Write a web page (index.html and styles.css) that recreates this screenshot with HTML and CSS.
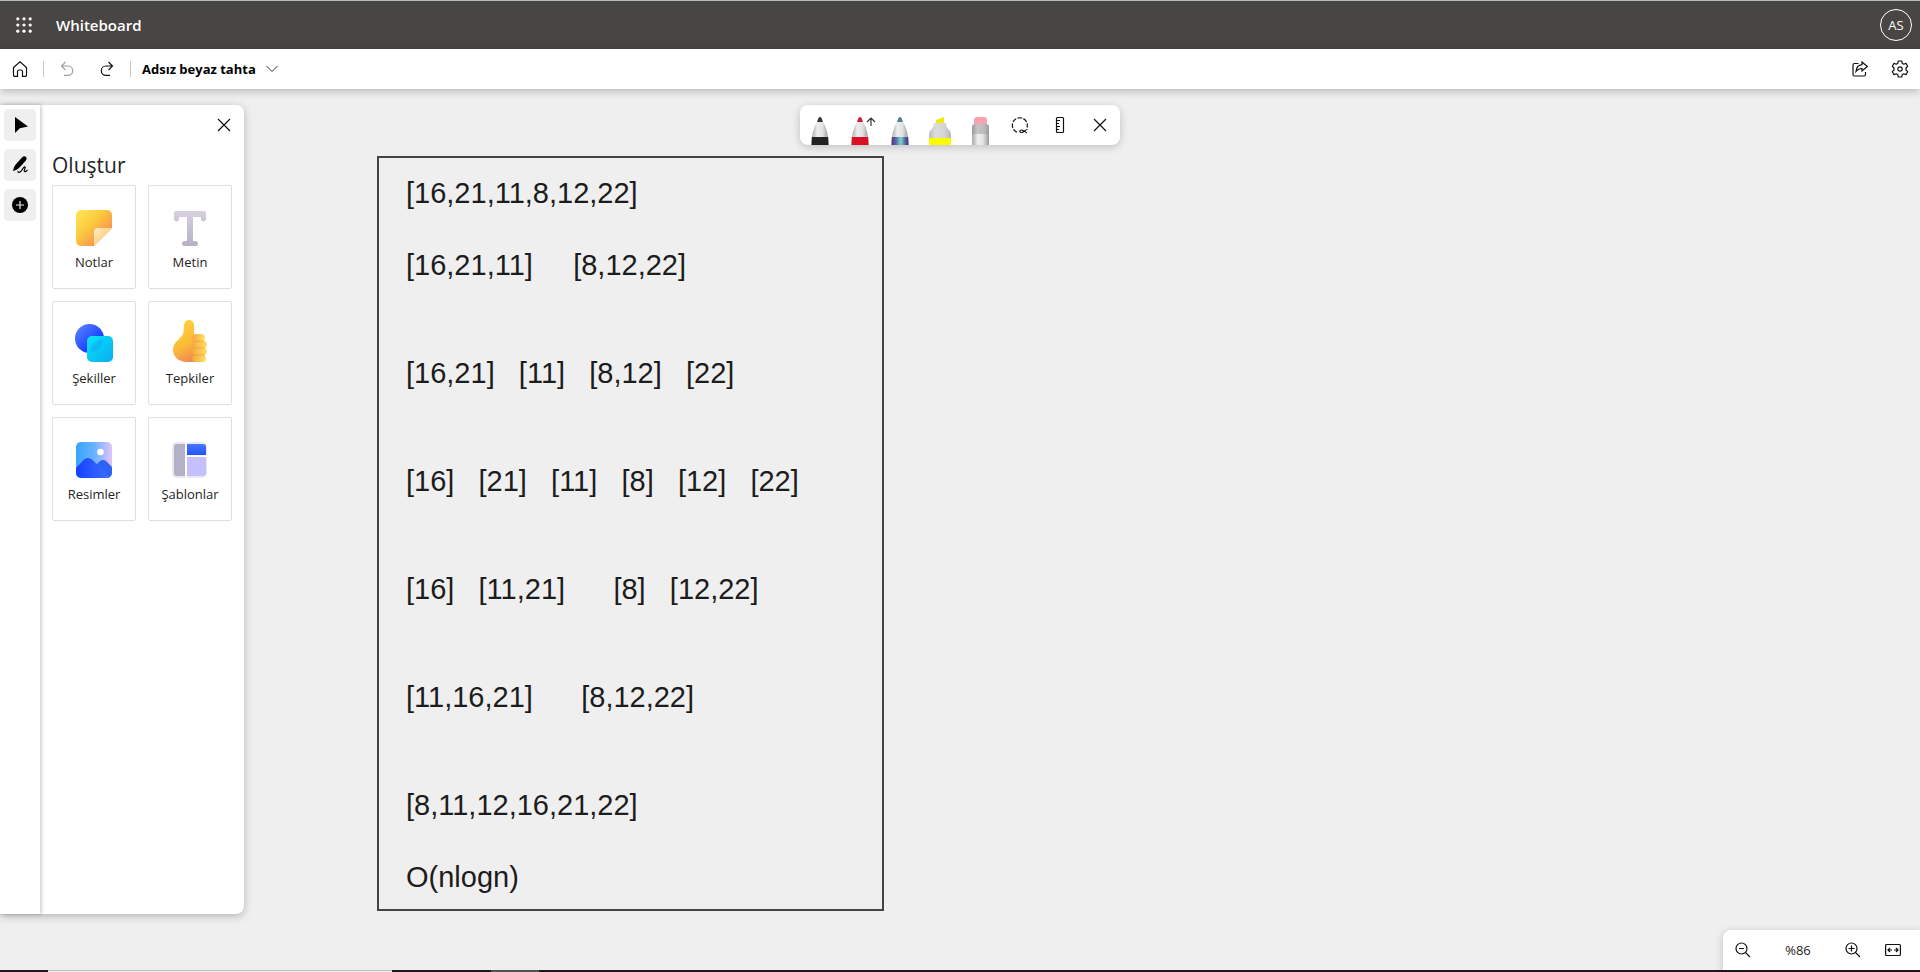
FILE: index.html
```html
<!DOCTYPE html>
<html lang="tr">
<head>
<meta charset="utf-8">
<title>Whiteboard</title>
<link rel="stylesheet" href="styles.css">
</head>
<body>
<header class="suite">
  <button class="icon-btn waffle" aria-label="Uygulama başlatıcısı"><svg width="16" height="16" viewBox="0 0 16 16" fill="#fff"><circle cx="1.8" cy="1.8" r="1.6"/><circle cx="8" cy="1.8" r="1.6"/><circle cx="14.2" cy="1.8" r="1.6"/><circle cx="1.8" cy="8" r="1.6"/><circle cx="8" cy="8" r="1.6"/><circle cx="14.2" cy="8" r="1.6"/><circle cx="1.8" cy="14.2" r="1.6"/><circle cx="8" cy="14.2" r="1.6"/><circle cx="14.2" cy="14.2" r="1.6"/></svg></button>
  <span class="brand">Whiteboard</span>
  <button class="avatar">AS</button>
</header>
<nav class="bar">
  <button class="icon-btn" aria-label="Giriş"><svg class="line" width="16" height="16" viewBox="0 0 16 16"><path d="M1.500 6.500 8 .8l6.500 5.700v8a.8.8 0 0 1-.8.800H10.500V10.500a1.500 1.500 0 0 0-1.500-1.500H7a1.500 1.500 0 0 0-1.500 1.500v4.800H2.300a.8.8 0 0 1-.8-.8z"/></svg></button>
  <span class="rule"></span>
  <button class="icon-btn" aria-label="Geri al" disabled><svg class="line" width="16" height="16" viewBox="0 0 16 16"><path d="M6.500 1 2.500 5l4 4M2.500 5H9a4.700 4.700 0 0 1 0 9.400H5"/></svg></button>
  <button class="icon-btn" aria-label="Yinele"><svg class="line" width="16" height="16" viewBox="0 0 16 16"><path d="m9.500 1 4 4-4 4M13.500 5H7a4.700 4.700 0 0 0 0 9.400h4"/></svg></button>
  <span class="rule"></span>
  <button class="title-btn">Adsız beyaz tahta<svg width="12" height="12" viewBox="0 0 12 12" fill="none" stroke="#333"><path d="m.5 3 5.500 5.500L11.500 3"/></svg></button>
  <span class="spacer"></span>
  <button class="icon-btn" aria-label="Paylaş"><svg class="line" width="16" height="16" viewBox="0 0 16 16"><path d="M6.500 2.500h-4A1.500 1.500 0 0 0 1 4v9.500A1.500 1.500 0 0 0 2.500 15H12a1.500 1.500 0 0 0 1.500-1.500V11M10 1l5.300 4.500L10 10V7.500c-3 0-4.500 1-6 3C4.300 6.500 6.500 4 10 3.700z"/></svg></button>
  <button class="icon-btn" aria-label="Ayarlar"><svg class="line" width="18" height="18" viewBox="0 0 18 18" stroke-linejoin="round"><path d="M7.300 1h3.400l.5 2.300 1.500.9 2.300-.8 1.700 2.900L15 8v2l1.700 1.700-1.700 2.900-2.300-.8-1.500.9-.5 2.300H7.300l-.5-2.300-1.500-.9-2.300.8-1.700-2.900L3 10V8L1.300 6.300 3 3.400l2.300.8 1.500-.9z"/><circle cx="9" cy="9" r="2.200"/></svg></button>
</nav>
<main class="board">
  <section class="frame"><pre class="note">[16,21,11,8,12,22]

[16,21,11]     [8,12,22]


[16,21]   [11]   [8,12]   [22]


[16]   [21]   [11]   [8]   [12]   [22]


[16]   [11,21]      [8]   [12,22]


[11,16,21]      [8,12,22]


[8,11,12,16,21,22]

O(nlogn)</pre></section>

  <aside class="dock">
    <div class="rail">
      <button class="tool" aria-label="Seç"><svg width="16" height="18" viewBox="0 0 16 18"><path d="M3 1v16l4.800-4.800L16 10.500z"/></svg></button>
      <button class="tool" aria-label="Mürekkep"><svg width="16" height="18" viewBox="0 0 16 18"><path d="M10 1.500c1.500-1.400 3-1.600 4-.6s.8 2.500-.5 4L7.500 11.500c-1.500 1.600-3 2.500-6.500 3.500.6-3 1.300-5 2.700-6.500z"/><path d="M5.500 15.500c1.500 1.500 3.200.8 4.500-1.500s3-4 3.200-2.600-1.700 3-.8 4 1.800-.6 3.300-1.400" fill="none" stroke="#000" stroke-width="1.200"/></svg></button>
      <button class="tool" aria-label="Oluştur"><svg width="16" height="16" viewBox="0 0 16 16"><circle cx="8" cy="8" r="8"/><path d="M8 4v8M4 8h8" stroke="#eee" stroke-width="1.200"/></svg></button>
    </div>
    <div class="create">
      <button class="icon-btn close" aria-label="Kapat"><svg class="line" width="14" height="14" viewBox="0 0 14 14"><path d="m1 1 12 12M13 1 1 13"/></svg></button>
      <h2>Oluştur</h2>
      <div class="cards">
        <button class="card"><svg width="36" height="36" viewBox="0 0 36 36"><defs><linearGradient id="n" x1="0" y1="0" x2="1" y2="1"><stop offset="0" stop-color="#ffe75c"/><stop offset=".4" stop-color="#fcca3c"/><stop offset=".8" stop-color="#f78c55"/></linearGradient><linearGradient id="n2" x1="0" y1="0" x2=".6" y2=".6"><stop offset="0" stop-color="#fff0cb"/><stop offset="1" stop-color="#fbcf80"/></linearGradient></defs><path d="M5 0h26a5 5 0 0 1 5 5v13L18 36H5a5 5 0 0 1-5-5V5a5 5 0 0 1 5-5" fill="url(#n)"/><path d="M18 36V22a4 4 0 0 1 4-4h14z" fill="url(#n2)"/></svg>Notlar</button>
        <button class="card"><svg width="36" height="36" viewBox="0 0 36 36"><defs><linearGradient id="t" x1="0" y1="0" x2="0" y2="1"><stop offset="0" stop-color="#d6d0de"/><stop offset="1" stop-color="#b8b0c5"/></linearGradient></defs><path d="M4 1h28a2 2 0 0 1 2 2v6.500a2.600 2.600 0 0 1-5 0V7h-8v24h2.500a2.500 2.500 0 0 1 0 5h-11a2.500 2.500 0 0 1 0-5H15V7H7v2.500a2.600 2.600 0 0 1-5 0V3a2 2 0 0 1 2-2" fill="url(#t)"/></svg>Metin</button>
        <button class="card"><svg width="38" height="38" viewBox="0 0 38 38"><defs><linearGradient id="s" x1="0" y1="0" x2="1" y2="1"><stop offset="0" stop-color="#5d8bff"/><stop offset=".7" stop-color="#173dff"/></linearGradient><linearGradient id="s2" x1="0" y1="0" x2="1" y2="1"><stop offset="0" stop-color="#0be4fa"/><stop offset="1" stop-color="#07adf0"/></linearGradient></defs><circle cx="14.500" cy="14.500" r="14.500" fill="url(#s)"/><rect x="12" y="12" width="26" height="26" rx="5" fill="url(#s2)"/><path d="M28 15C28 22 23 28 15 28 16 21 21 16 28 15" fill="#11a4f3" opacity=".5"/></svg>Şekiller</button>
        <button class="card"><svg width="36" height="42" viewBox="0 -4 36 42"><defs><linearGradient id="u" x1=".3" y1="0" x2=".6" y2="1"><stop offset="0" stop-color="#ffd13d"/><stop offset=".6" stop-color="#fdba36"/><stop offset="1" stop-color="#ee8b54"/></linearGradient><linearGradient id="u2" x1="0" y1="0" x2="1" y2="0"><stop offset="0" stop-color="#f6a63b"/><stop offset="1" stop-color="#ffe163"/></linearGradient></defs><path d="M12 1a5 5 0 0 1 10 0v13h4v24H15C7 38 1 33 1 26c0-6 4-9 8-13 2-2 3-5 3-12" fill="url(#u)"/><g fill="url(#u2)"><rect x="20" y="10" width="13" height="7.500" rx="3.700"/><rect x="20" y="17" width="15" height="7" rx="3.500"/><rect x="20" y="24" width="15" height="7" rx="3.500"/><rect x="20" y="31" width="14" height="7" rx="3.500"/></g><path d="M21 17.300h11M21 24h12M21 31h12" stroke="#e8a23c" stroke-width=".8"/></svg>Tepkiler</button>
        <button class="card"><svg width="36" height="36" viewBox="0 0 36 36"><defs><linearGradient id="r" x1="0" y1="0" x2="1" y2="0"><stop offset="0" stop-color="#38a5ff"/><stop offset=".5" stop-color="#66b2ff"/><stop offset="1" stop-color="#e2c2fb"/></linearGradient><linearGradient id="r2" x1="0" y1="0" x2="1" y2="0"><stop offset="0" stop-color="#1641ff"/><stop offset="1" stop-color="#3f73ff"/></linearGradient><clipPath id="rc"><rect width="36" height="36" rx="5"/></clipPath></defs><g clip-path="url(#rc)"><path d="M0 0h36v36H0z" fill="url(#r)"/><path d="m16 27 8-8q3-2 6 0l6 6v11H16z" fill="#2e62f4"/><path d="m0 26 8-8.500q4-3 8 0L35 36H0z" fill="url(#r2)"/></g><circle cx="24.500" cy="10" r="3.300" fill="#fff"/></svg>Resimler</button>
        <button class="card"><svg width="36" height="36" viewBox="0 0 36 36"><defs><linearGradient id="b" x1="0" y1="0" x2="0" y2="1"><stop offset="0" stop-color="#4478ff"/><stop offset="1" stop-color="#2453f5"/></linearGradient></defs><rect width="35" height="36" rx="5" fill="#eae8ed"/><path d="M5 2h8v32H5a3 3 0 0 1-3-3V5a3 3 0 0 1 3-3" fill="#b3b1c8"/><path d="M15 2h16a3 3 0 0 1 3 3v8H15z" fill="url(#b)"/><path d="M15 15h19v16a3 3 0 0 1-3 3H15z" fill="#c3c0fd"/><path d="M13 0h2v36h-2zM15 13h20v2H15z" fill="#fff"/></svg>Şablonlar</button>
      </div>
    </div>
  </aside>

  <div class="pens">
    <button class="pen" aria-label="Siyah kalem"><svg width="40" height="40" viewBox="0 0 40 40"><defs><linearGradient id="p"><stop offset="0" stop-color="#aaa"/><stop offset=".35" stop-color="#eee"/><stop offset=".65" stop-color="#e2e2e2"/><stop offset="1" stop-color="#999"/></linearGradient></defs><path d="M17 17C13 24 12 28 11.500 40h17C28 28 27 24 23 17z" fill="url(#p)"/><path d="m17 17 1.500-4q1.500-2 3 0l1.500 4z" fill="#333"/><path d="M11.800 32h16.400l.3 8h-17z" fill="#222"/></svg></button>
    <button class="pen" aria-label="Kırmızı kalem"><svg width="40" height="40" viewBox="0 0 40 40"><path d="M17 17C13 24 12 28 11.500 40h17C28 28 27 24 23 17z" fill="url(#p)"/><path d="m17 17 1.500-4q1.500-2 3 0l1.500 4z" fill="#d9142d"/><path d="M11.800 32h16.400l.3 8h-17z" fill="#dc1025"/><path d="M31 21v-8m-4 4 4-4 4 4" fill="none" stroke="#333" stroke-width="1.200"/></svg></button>
    <button class="pen" aria-label="Galaksi kalem"><svg width="40" height="40" viewBox="0 0 40 40"><defs><linearGradient id="g"><stop offset="0" stop-color="#5b2c74"/><stop offset=".3" stop-color="#5378ae"/><stop offset=".55" stop-color="#86d1c5"/><stop offset=".8" stop-color="#476da5"/><stop offset="1" stop-color="#57256b"/></linearGradient></defs><path d="M17 17C13 24 12 28 11.500 40h17C28 28 27 24 23 17z" fill="url(#p)"/><path d="m17 17 1.500-4q1.500-2 3 0l1.500 4z" fill="#4b8588"/><path d="M11.800 32h16.400l.3 8h-17z" fill="url(#g)"/></svg></button>
    <button class="pen" aria-label="Vurgulayıcı"><svg width="40" height="40" viewBox="0 0 40 40"><defs><linearGradient id="h"><stop offset="0" stop-color="#bbb"/><stop offset=".3" stop-color="#dcdcdc"/><stop offset=".7" stop-color="#d4d4d4"/><stop offset="1" stop-color="#b5b5b5"/></linearGradient></defs><path d="M14 18h12c0 7 5 6 5 12v10H9V30c0-6 5-5 5-12" fill="url(#h)"/><path d="M16 18v-3l8-3v6z" fill="#f2ed00"/><path d="M9 33h22v7H9z" fill="#fbfb00"/></svg></button>
    <button class="pen" aria-label="Silgi"><svg width="40" height="40" viewBox="0 0 40 40"><defs><linearGradient id="e"><stop offset="0" stop-color="#9a9a9a"/><stop offset=".3" stop-color="#c4c4c4"/><stop offset=".7" stop-color="#bdbdbd"/><stop offset="1" stop-color="#999"/></linearGradient></defs><path d="M14 19v-4q0-3 3-3h7q3 0 3 3v4z" fill="#f8a2ad"/><path d="M12 40V22q0-3 3-3h11q3 0 3 3v18z" fill="url(#e)"/><path d="M12 29h17v11H12z" fill="url(#p)"/></svg></button>
    <button class="pen" aria-label="Kement"><svg class="line" width="40" height="40" viewBox="0 0 40 40"><path d="M17 27.200A7.500 7.500 0 1 1 27 22.500" stroke-dasharray="4.500 1.500"/><path d="M27 28c-2-1-3.500-3-5.500-3s-2.500 2.500 0 2.500S25 24.500 27.500 24.500"/></svg></button>
    <button class="pen" aria-label="Cetvel"><svg class="line" width="40" height="40" viewBox="0 0 40 40"><rect x="16.500" y="12.500" width="7" height="15" rx="1"/><path d="M17 15.500h3M17 18.500h2M17 21.500h3M17 24.500h2"/></svg></button>
    <button class="pen" aria-label="Kapat"><svg class="line" width="40" height="40" viewBox="0 0 40 40"><path d="m14 14 12 12M26 14 14 26"/></svg></button>
  </div>

  <div class="zoom">
    <button class="icon-btn" aria-label="Uzaklaştır"><svg class="line" width="16" height="16" viewBox="0 0 16 16"><circle cx="6.500" cy="6.500" r="5.500"/><path d="m10.500 10.500 4.500 4.500M4 6.500h5"/></svg></button>
    <span class="level">%86</span>
    <button class="icon-btn" aria-label="Yakınlaştır"><svg class="line" width="16" height="16" viewBox="0 0 16 16"><circle cx="6.500" cy="6.500" r="5.500"/><path d="m10.500 10.500 4.500 4.500M3.500 6.500h6M6.500 3.500v6"/></svg></button>
    <button class="icon-btn" aria-label="Ekrana sığdır"><svg class="line" width="16" height="16" viewBox="0 0 16 16"><rect x=".6" y="2.500" width="14.800" height="11" rx="1"/><path d="M7 8H3m2-2L3 8l2 2M9 8h4m-2-2 2 2-2 2"/></svg></button>
  </div>
</main>
<footer class="taskbar"><span class="task-search"></span><span class="task-active"></span></footer>
</body>
</html>
```
FILE: styles.css
```css
* { box-sizing: border-box; }
body {
  margin: 0;
  height: 100vh;
  display: flex;
  flex-direction: column;
  overflow: hidden;
  font-family: "Open Sans", "Noto Sans", sans-serif;
  color: #242424;
}
button {
  font: inherit;
  color: inherit;
  border: 0;
  padding: 0;
  background: none;
}
svg { display: block; flex: none; }
.line { fill: none; stroke: #111; stroke-width: 1.2; }
.icon-btn {
  width: 40px;
  height: 40px;
  display: flex;
  align-items: center;
  justify-content: center;
}
.icon-btn:disabled { opacity: 0.4; }
.suite {
  display: flex;
  align-items: center;
  height: 49px;
  flex: none;
  background: #484644;
  border-top: 1px solid #b8bcb8;
  color: #fff;
}
.waffle { width: 48px; }
.brand {
  flex: 1;
  padding-left: 8px;
  font-size: 15px;
  font-weight: 600;
}
.avatar {
  width: 32px;
  height: 32px;
  margin-right: 8px;
  border: 1px solid #fff;
  border-radius: 50%;
  font-size: 13px;
}
.bar {
  position: relative;
  z-index: 1;
  display: flex;
  align-items: center;
  height: 40px;
  flex: none;
  background: #fff;
  box-shadow: 0 2px 8px rgba(0, 0, 0, 0.25);
}
.rule {
  width: 1px;
  height: 16px;
  margin: 0 3px;
  background: #c8c6c4;
}
.title-btn {
  display: flex;
  align-items: center;
  gap: 10px;
  padding-left: 8px;
  font-size: 13px;
  font-weight: 700;
  color: #000;
}
.spacer { flex: 1; }
.board {
  position: relative;
  flex: 1;
  min-height: 0;
  background: #efefef;
}
.frame {
  position: absolute;
  left: 377px;
  top: 67px;
  width: 507px;
  padding: 17px 27px 14px;
  border: 2px solid #444;
}
.note {
  margin: 0;
  font: 29px/36px "Liberation Sans", sans-serif;
  color: #1c1c1c;
}
.dock {
  position: absolute;
  left: 0;
  top: 16px;
  bottom: 56px;
  display: flex;
  background: #fff;
  border-radius: 0 8px 8px 0;
  box-shadow: 0 2px 8px rgba(0, 0, 0, 0.25);
}
.rail {
  display: flex;
  flex-direction: column;
  gap: 8px;
  padding: 4px;
  width: 40px;
  box-shadow: 1px 0 4px rgba(0, 0, 0, 0.25);
}
.tool {
  width: 32px;
  height: 32px;
  display: flex;
  align-items: center;
  justify-content: center;
  background: #efefef;
  border-radius: 4px;
}
.create {
  display: flex;
  flex-direction: column;
  padding: 0 12px;
}
.close { align-self: flex-end; margin-right: -12px; }
.create h2 {
  margin: 4px 0;
  font-size: 21px;
  line-height: 32px;
  font-weight: 400;
}
.cards {
  display: grid;
  grid-template-columns: 84px 84px;
  gap: 12px;
}
.card {
  display: flex;
  flex-direction: column;
  align-items: center;
  justify-content: flex-end;
  gap: 6px;
  height: 104px;
  padding-bottom: 16px;
  border: 1px solid #e1dfdd;
  border-radius: 2px;
  font-size: 13px;
  line-height: 20px;
}
.pens {
  position: absolute;
  left: 50%;
  top: 16px;
  transform: translateX(-50%);
  display: flex;
  background: #fff;
  border-radius: 8px;
  box-shadow: 0 2px 8px rgba(0, 0, 0, 0.2);
}
.pen { width: 40px; height: 40px; }
.zoom {
  position: absolute;
  right: 0;
  bottom: 0;
  display: flex;
  align-items: center;
  padding-right: 7px;
  background: #fff;
  border-radius: 8px 0 0 0;
  box-shadow: 0 2px 8px rgba(0, 0, 0, 0.2);
}
.level {
  width: 70px;
  text-align: center;
  font-size: 13px;
}
.taskbar {
  display: flex;
  height: 2px;
  flex: none;
  background: #1c1a1c;
}
.task-search {
  width: 344px;
  margin-left: 48px;
  background: #f2f2f2;
  border-top: 1px solid #bbb;
}
.task-active {
  width: 48px;
  margin-left: 99px;
  background: #505050;
}
```
